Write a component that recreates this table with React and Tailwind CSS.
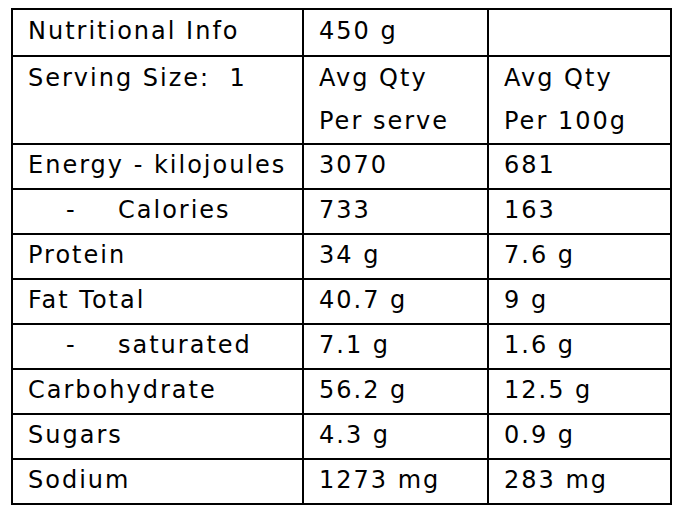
const rows = [
  { label: 'Energy - kilojoules', serve: '3070', per100: '681' },
  { label: 'Calories', serve: '733', per100: '163', sub: true },
  { label: 'Protein', serve: '34 g', per100: '7.6 g' },
  { label: 'Fat Total', serve: '40.7 g', per100: '9 g' },
  { label: 'saturated', serve: '7.1 g', per100: '1.6 g', sub: true },
  { label: 'Carbohydrate', serve: '56.2 g', per100: '12.5 g' },
  { label: 'Sugars', serve: '4.3 g', per100: '0.9 g' },
  { label: 'Sodium', serve: '1273 mg', per100: '283 mg' },
]

const cell = 'border-2 border-black align-top pl-[15px] p-0 whitespace-nowrap'

export default function App() {
  return (
    <div className="w-[682px] h-[512px] bg-white pt-[8px] pl-[11px] text-black font-['DejaVu_Sans',sans-serif] text-[24px] tracking-[2px] leading-[40px]">
      <table className="border-collapse w-[659px] table-fixed">
        <colgroup>
          <col className="w-[291px]" />
          <col className="w-[185px]" />
          <col className="w-[183px]" />
        </colgroup>
        <tbody>
          <tr className="h-[47px]">
            <td className={`${cell} leading-[42px]`}>Nutritional Info</td>
            <td className={`${cell} leading-[42px]`}>450 g</td>
            <td className={cell}></td>
          </tr>
          <tr className="h-[84px]">
            <td className={`${cell} leading-[42px]`}>Serving Size:&nbsp; 1</td>
            <td className={`${cell} leading-[43px]`}>Avg Qty<br />Per serve</td>
            <td className={`${cell} leading-[43px]`}>Avg Qty<br />Per 100g</td>
          </tr>
          {rows.map((r) => (
            <tr key={r.label} className="h-[45px]">
              <td className={cell}>
                {r.sub ? (
                  <span className="flex">
                    <span className="pl-[38px] w-[90px]">-</span>
                    <span>{r.label}</span>
                  </span>
                ) : r.label}
              </td>
              <td className={cell}>{r.serve}</td>
              <td className={cell}>{r.per100}</td>
            </tr>
          ))}
        </tbody>
      </table>
    </div>
  )
}
